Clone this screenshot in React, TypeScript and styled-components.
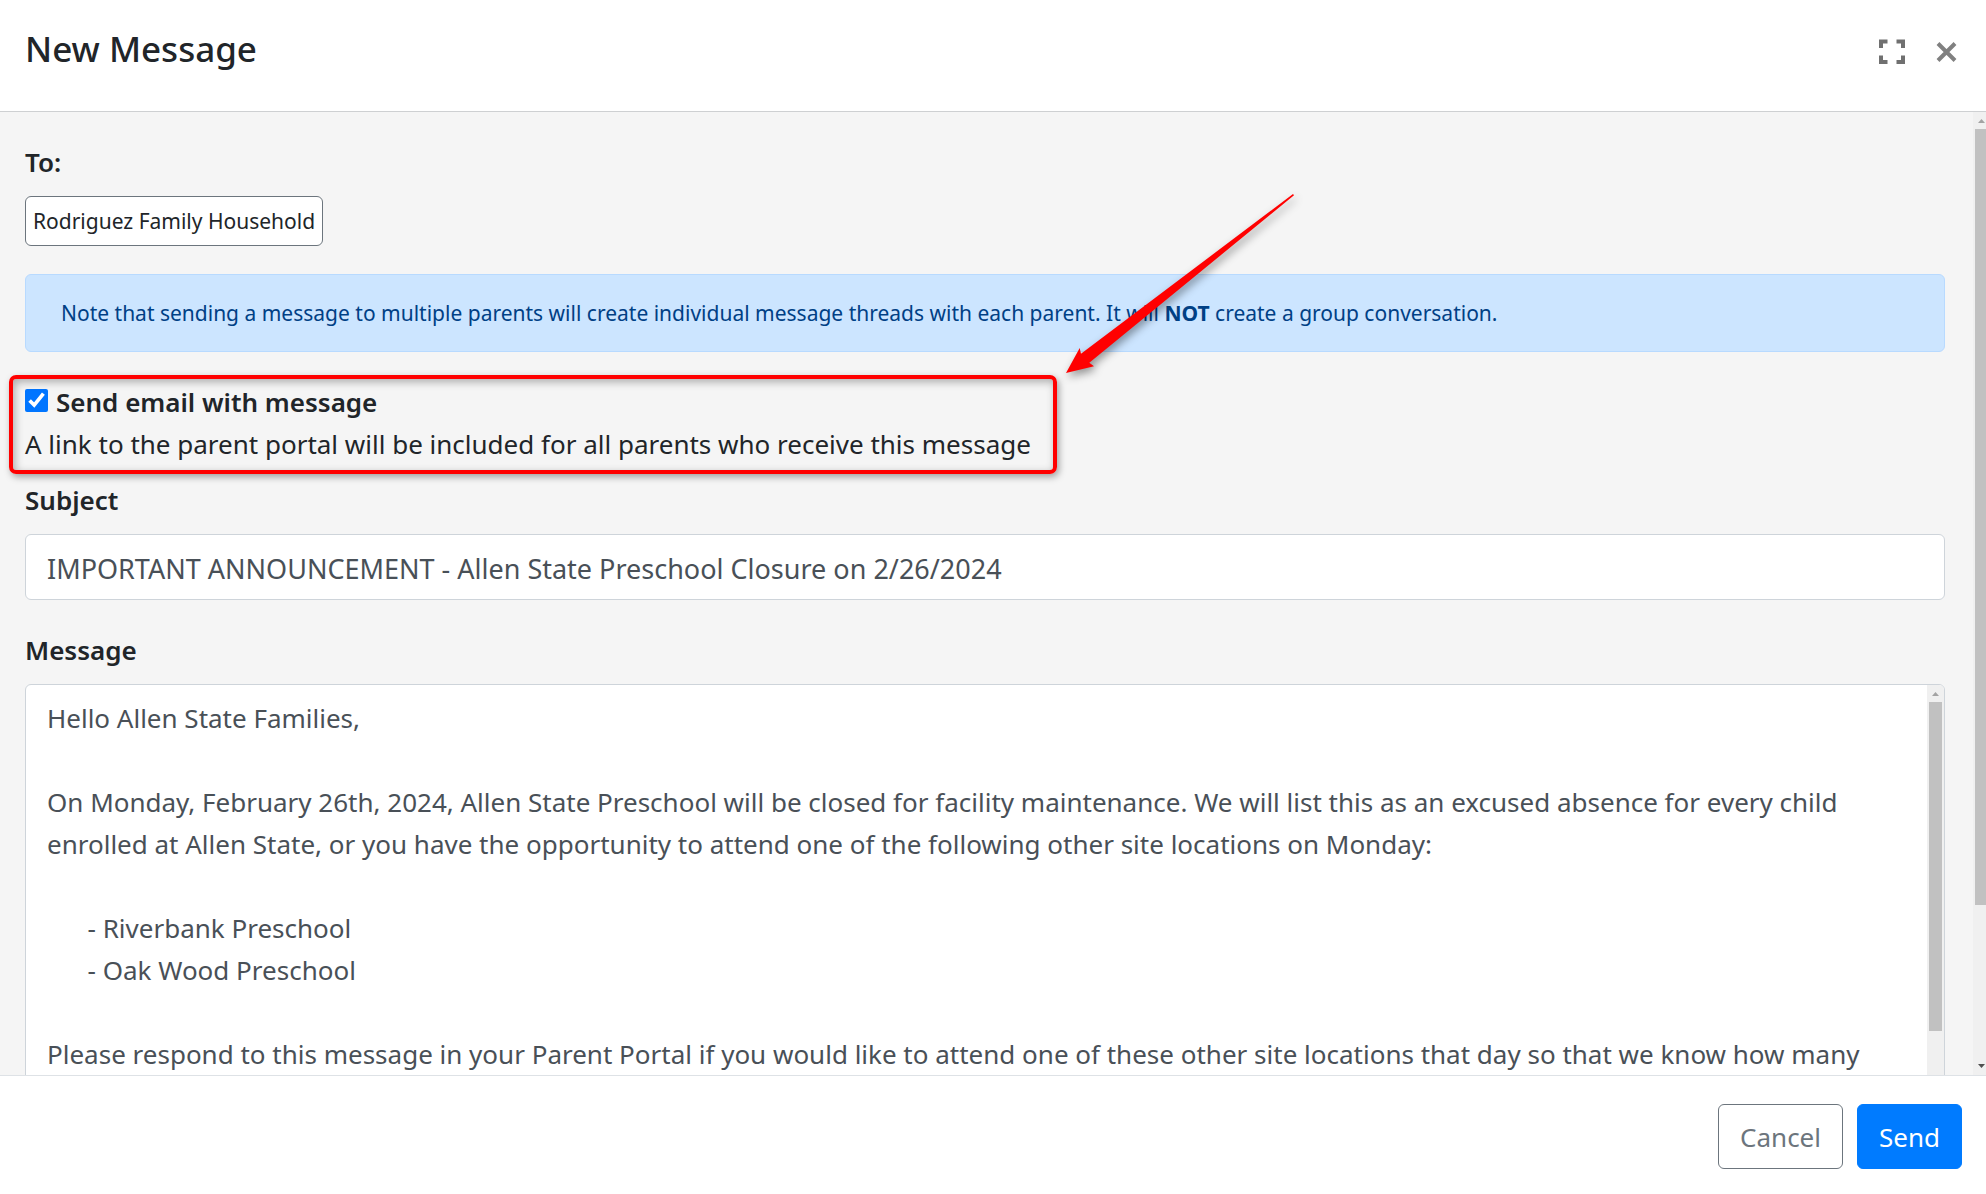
import React, { useState } from "react";
import styled, { createGlobalStyle } from "styled-components";

const GlobalStyle = createGlobalStyle`
  *, *::before, *::after { box-sizing: border-box; }
  html, body, #root { height: 100%; }
  body {
    margin: 0;
    background: #fff;
    color: #212529;
    font-family: "Segoe UI", "Noto Sans", "Open Sans", sans-serif;
    font-size: 26px;
    line-height: 42px;
  }
  button, input, textarea { font: inherit; }
`;

const Modal = styled.div`
  display: flex;
  flex-direction: column;
  height: 100vh;
  overflow: hidden;
`;

const Header = styled.header`
  display: flex;
  justify-content: space-between;
  align-items: flex-start;
  height: 112px;
  padding: 23px 25px;
  border-bottom: 1px solid #ced0d2;
`;

const Title = styled.h1`
  margin: 0;
  font-size: 35px;
  font-weight: 500;
  line-height: 52px;
`;

const HeaderActions = styled.div`
  display: flex;
  gap: 24px;
  padding-top: 13px;
`;

const IconButton = styled.button`
  display: flex;
  padding: 0;
  border: 0;
  background: none;
  color: #707070;
  cursor: pointer;
`;

const Body = styled.div`
  display: flex;
  flex: 1;
  min-height: 0;
  background: #f5f5f5;
`;

const Content = styled.main`
  flex: 1;
  min-width: 0;
  padding: 29px 28px 25px 25px;
  overflow-y: auto;
  scrollbar-width: none;
`;

const Label = styled.label`
  display: block;
  margin-bottom: 13px;
  font-weight: 600;
`;

const GroupLabel = styled(Label).attrs({ as: "div" })``;

const Recipient = styled.span`
  display: inline-block;
  vertical-align: top;
  padding: 0 7px;
  border: 1px solid #6c757d;
  border-radius: 6px;
  background: #fff;
  font-size: 21px;
  line-height: 48px;
`;

const Note = styled.div`
  margin: 28px 0 29px;
  padding: 21px 35px;
  border: 1px solid #b8daff;
  border-radius: 6px;
  background: #cce5ff;
  color: #004085;
  font-size: 21px;
  line-height: 34px;
`;

const EmailOption = styled.div`
  position: relative;
  width: fit-content;
  margin-bottom: 14px;
`;

const CheckRow = styled.div`
  display: flex;
  align-items: center;
  gap: 8px;
`;

const Checkbox = styled.input`
  width: 23px;
  height: 23px;
  margin: 0 0 4px;
  accent-color: #0075ff;
`;

const CheckLabel = styled.label`
  font-weight: 600;
`;

const Hint = styled.div``;

const Highlight = styled.div`
  position: absolute;
  inset: -6px -26px -9px -16px;
  border: 4px solid #f00;
  border-radius: 7px;
  box-shadow: 2px 3px 7px rgba(0, 0, 0, 0.35), inset 2px 3px 8px rgba(0, 0, 0, 0.3);
  pointer-events: none;
`;

const Arrow = styled.svg`
  position: absolute;
  left: 100%;
  bottom: calc(100% + 4px);
  width: 240px;
  height: 190px;
  overflow: visible;
  filter: drop-shadow(2px 4px 4px rgba(0, 0, 0, 0.4));
  pointer-events: none;
`;

const field = `
  display: block;
  width: 100%;
  border: 1px solid #ced4da;
  border-radius: 6px;
  background: #fff;
  color: #495057;
  outline: none;
`;

const SubjectInput = styled.input`
  ${field}
  height: 66px;
  margin-bottom: 29px;
  padding: 12px 21px 10px;
  font-size: 27px;
`;

const MessageBox = styled.div`
  ${field}
  display: flex;
  overflow: hidden;
`;

const MessageInput = styled.textarea`
  display: block;
  flex: 1;
  min-width: 0;
  padding: 12px 8px 12px 21px;
  border: 0;
  background: transparent;
  color: inherit;
  resize: none;
  outline: none;
  overflow: hidden;
`;

const Track = styled.div<{ $width: number }>`
  display: flex;
  flex: none;
  flex-direction: column;
  width: ${(p) => p.$width}px;
  overflow: hidden;
  background: #f0f0f0;
`;

const TrackEnd = styled.svg`
  flex: none;
  width: 17px;
  height: 17px;
`;

const Rail = styled.div`
  flex: 1;
  width: 17px;
  padding: 0 2px;
`;

const Thumb = styled.div<{ $share: number }>`
  height: ${(p) => p.$share}%;
  background: #c1c1c1;
`;

const Footer = styled.footer`
  display: flex;
  justify-content: flex-end;
  align-items: flex-start;
  gap: 14px;
  height: 119px;
  padding: 28px 24px;
  border-top: 1px solid #dee2e6;
`;

const Button = styled.button<{ $primary?: boolean }>`
  height: 65px;
  padding: 0 21px;
  border: 1px solid ${(p) => (p.$primary ? "#007bff" : "#6c757d")};
  border-radius: 6px;
  background: ${(p) => (p.$primary ? "#007bff" : "#fff")};
  color: ${(p) => (p.$primary ? "#fff" : "#6c757d")};
  cursor: pointer;
`;

function Scrollbar({ width, share }: { width: number; share: number }) {
  return (
    <Track $width={width} aria-hidden="true">
      <TrackEnd viewBox="0 0 17 17">
        <path d="M8.5 7 12 11H5Z" fill="#a3a3a3" />
      </TrackEnd>
      <Rail>
        <Thumb $share={share} />
      </Rail>
      <TrackEnd viewBox="0 0 17 17">
        <path d="M5 6h7l-3.500 4Z" fill="#505050" />
      </TrackEnd>
    </Track>
  );
}

const MESSAGE = [
  "Hello Allen State Families,",
  "",
  "On Monday, February 26th, 2024, Allen State Preschool will be closed for facility maintenance. We will list this as an excused absence for every child enrolled at Allen State, or you have the opportunity to attend one of the following other site locations on Monday:",
  "",
  "      - Riverbank Preschool",
  "      - Oak Wood Preschool",
  "",
  "Please respond to this message in your Parent Portal if you would like to attend one of these other site locations that day so that we know how many",
].join("\n");

export default function App() {
  const [sendEmail, setSendEmail] = useState(true);
  const [subject, setSubject] = useState(
    "IMPORTANT ANNOUNCEMENT - Allen State Preschool Closure on 2/26/2024"
  );
  const [message, setMessage] = useState(MESSAGE);

  return (
    <>
      <GlobalStyle />
      <Modal role="dialog" aria-labelledby="title">
        <Header>
          <Title id="title">New Message</Title>
          <HeaderActions>
            <IconButton aria-label="Full screen">
              <svg width="32" height="32" viewBox="0 0 32 32" fill="none" stroke="currentColor" strokeWidth="4">
                <path d="M6 12V5.500H12.500M21.500 5.500H28V12M28 19.500V26H21.500M12.500 26H6V19.500" />
              </svg>
            </IconButton>
            <IconButton aria-label="Close">
              <svg width="30" height="32" viewBox="0 0 30 32" fill="none" stroke="#808080" strokeWidth="4">
                <path d="m7 7.500 17 17M24 7.500l-17 17" />
              </svg>
            </IconButton>
          </HeaderActions>
        </Header>
        <Body>
          <Content>
            <GroupLabel>To:</GroupLabel>
            <Recipient>Rodriguez Family Household</Recipient>
            <Note>
              Note that sending a message to multiple parents will create individual message threads with each
              parent. It will <strong>NOT</strong> create a group conversation.
            </Note>
            <EmailOption>
              <CheckRow>
                <Checkbox
                  id="send-email"
                  type="checkbox"
                  checked={sendEmail}
                  onChange={(e) => setSendEmail(e.target.checked)}
                />
                <CheckLabel htmlFor="send-email">Send email with message</CheckLabel>
              </CheckRow>
              <Hint>A link to the parent portal will be included for all parents who receive this message</Hint>
              <Highlight>
                <Arrow viewBox="0 0 240 190" aria-hidden="true">
                  <path
                    d="M13 188 26.700 163 28 168.700 240 9 241 10.300 36.300 177.700 41 181.300Z"
                    fill="#f00"
                  />
                </Arrow>
              </Highlight>
            </EmailOption>
            <Label htmlFor="subject">Subject</Label>
            <SubjectInput id="subject" value={subject} onChange={(e) => setSubject(e.target.value)} />
            <Label htmlFor="message">Message</Label>
            <MessageBox>
              <MessageInput
                id="message"
                rows={12}
                value={message}
                onChange={(e) => setMessage(e.target.value)}
              />
              <Scrollbar width={17} share={66.5} />
            </MessageBox>
          </Content>
          <Scrollbar width={13} share={83.5} />
        </Body>
        <Footer>
          <Button type="button">Cancel</Button>
          <Button type="button" $primary>
            Send
          </Button>
        </Footer>
      </Modal>
    </>
  );
}
